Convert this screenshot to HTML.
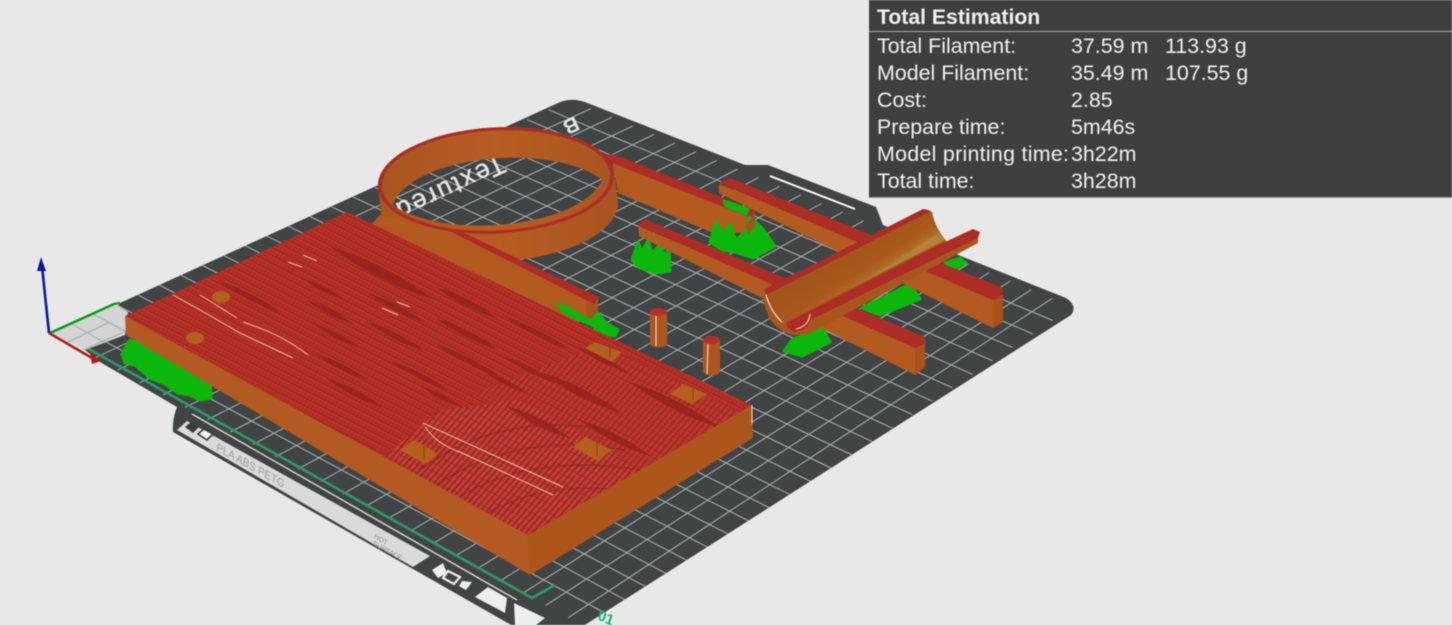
<!DOCTYPE html>
<html>
<head>
<meta charset="utf-8">
<title>Total Estimation</title>
<style>
html,body{margin:0;padding:0;background:#e8e8e8;width:1452px;height:625px;overflow:hidden}
svg{display:block;position:absolute;left:0;top:0;filter:blur(.4px)}
.t{font-family:"Liberation Sans",sans-serif;font-size:21.4px;fill:#f0f0f0}
</style>
</head>
<body>
<svg width="1452" height="625" viewBox="0 0 1452 625" xmlns="http://www.w3.org/2000/svg">
<defs>
<clipPath id="pc"><path d="M120,303 L558,103 Q572,96 590,104 L745,165 L768,165 L876,207 L883,225 L1066,298 Q1078,306 1071,315 L577,630 L520,630 L173,432 Q172,420 177,407 L100,362 L85,350 Z"/></clipPath>
<clipPath id="tc"><path d="M125,316 L347,212 L752,405 L528,535 Z"/></clipPath>
<pattern id="dots" width="4" height="7" patternUnits="userSpaceOnUse" patternTransform="rotate(27)">
<rect width="4" height="7" fill="#b62f27"/>
<rect y="6" width="4" height=".9" fill="#8f241d"/>
<rect y="0" width="4" height=".6" fill="#c9583c" opacity=".55"/>
<rect x="2.600" y="1" width="1" height="5" fill="#a8291f"/>
</pattern>
<pattern id="rib" width="5" height="8" patternUnits="userSpaceOnUse" patternTransform="rotate(27) skewX(-14)">
<rect width="5" height="8" fill="#c63e37"/>
<rect x="3.400" width="1.600" height="8" fill="#8b271e"/>
<rect y="7.400" width="5" height=".6" fill="#7e2219" opacity=".7"/>
</pattern>
<linearGradient id="pipe" gradientUnits="userSpaceOnUse" x1="845" y1="250" x2="866" y2="282">
<stop offset="0" stop-color="#a3541b"/><stop offset=".7" stop-color="#a9591c"/><stop offset=".92" stop-color="#ad6c25"/><stop offset="1" stop-color="#b3813a"/>
</linearGradient>
<linearGradient id="wall" x1="0" y1="0" x2="1" y2="0">
<stop offset="0" stop-color="#a85620"/><stop offset=".5" stop-color="#b75d22"/><stop offset="1" stop-color="#a95520"/>
</linearGradient>
<path id="l" d="M-50,0 Q0,-9 50,0 Q0,9 -50,0 Z" fill="#98241d"/>
</defs>

<rect width="1452" height="625" fill="#e8e8e8"/>
<path d="M120,303 L558,103 Q572,96 590,104 L745,165 L768,165 L876,207 L883,225 L1066,298 Q1078,306 1071,315 L577,630 L520,630 L173,432 Q172,420 177,407 L100,362 L85,350 Z" fill="#414444"/>

<g clip-path="url(#pc)">
<g stroke="#aeb2b2" stroke-width="1" fill="none">
<path d="M72.5,345.4L591,108.6M95,357.8L612,117.3M117.6,370.1L632.9,125.9M140.2,382.5L653.8,134.5M162.7,394.9L674.8,143.1M185.2,407.3L695.8,151.8M207.8,419.6L716.7,160.4M230.3,432L737.7,169M252.9,444.4L758.6,177.6M275.4,456.8L779.6,186.3M297.9,469.1L800.6,194.9M320.5,481.5L821.5,203.5M343,493.9L842.5,212.1M365.6,506.3L863.4,220.8M388.1,518.6L884.4,229.4M410.6,531L905.4,238M433.2,543.4L926.3,246.6M455.7,555.8L947.3,255.3M478.3,568.1L968.2,263.9M500.8,580.5L989.2,272.5M523.3,592.9L1010.2,281.1M545.9,605.3L1031.1,289.8M568.4,617.6L1052.1,298.4"/>
<path d="M71.7,323.3L611.1,616.5M93.3,313.6L631.2,603.1M115,303.9L651.2,589.6M136.7,294.2L671.3,576.2M158.4,284.5L691.4,562.7M180,274.7L711.5,549.2M201.7,265L731.6,535.8M223.4,255.3L751.6,522.3M245,245.6L771.7,508.9M266.7,235.9L791.8,495.4M288.4,226.2L811.9,482M310,216.5L832,468.5M331.7,206.8L852,455M353.4,197.1L872.1,441.6M375.1,187.4L892.2,428.1M396.7,177.6L912.3,414.6M418.4,167.9L932.4,401.2M440.1,158.2L952.4,387.7M461.7,148.5L972.5,374.3M483.4,138.8L992.6,360.8M505.1,129.1L1012.7,347.4M526.7,119.4L1032.8,333.9M548.4,109.7L1052.8,320.5"/>
</g>
</g>

<!-- front strip and print marks -->
<path d="M177,430 L187,421 L430,556 L413,567 Z" fill="#d9dada"/>
<path d="M192,414 L517,600" stroke="#d9dada" stroke-width="1.400" fill="none"/>
<path d="M87,348 L532,598 L555,585" stroke="#2b9a6a" stroke-width="2.600" fill="none"/>
<path d="M185,427 L191,422 L199,427 L193,433 Z" fill="#3a3a3a"/>
<path d="M198,434 L204,429 L213,434 L207,440 Z" fill="#efefef" stroke="#3a3a3a" stroke-width="1.600"/>
<text transform="matrix(.87 .49 -.2 .98 216,450)" font-family="Liberation Sans,sans-serif" font-size="11" fill="#9a9a9a">PLA ABS PETG</text>
<text transform="matrix(.87 .49 -.2 .98 374,538)" font-family="Liberation Sans,sans-serif" font-size="7" fill="#8a8a8a">HOT</text>
<text transform="matrix(.87 .49 -.2 .98 373,545)" font-family="Liberation Sans,sans-serif" font-size="7" fill="#8a8a8a">SURFACE</text>
<path d="M432,570 L443,563 L447,573 L438,578 Z" fill="#efefef"/>
<path d="M448,571 L460,577 L454,584 L443,578 Z" fill="none" stroke="#efefef" stroke-width="2.200"/>
<path d="M462,581 L472,582 L466,590 L459,586 Z" fill="#efefef"/>
<path d="M475,597 L488,587 L507,598 L505,613 Z" fill="#eeeeee"/>
<path d="M514,603 L545,618 L536,625 L515,625 Z" fill="#eeeeee"/>
<path d="M770,176 L855,209" stroke="#fff" stroke-width="2" fill="none"/>
<text transform="matrix(.9 .42 -.3 .95 597,619)" font-family="Liberation Sans,sans-serif" font-size="15" font-weight="bold" fill="#19b56c">01</text>

<!-- plate printing -->
<text transform="matrix(-.9 .42 -.42 -.9 500,155)" font-family="Liberation Sans,sans-serif" font-size="26" letter-spacing="2.500" stroke="#e4e4e4" stroke-width=".5" fill="#e4e4e4">Textured</text>
<text transform="matrix(-.9 .42 -.42 -.9 575,116)" font-family="Liberation Sans,sans-serif" font-size="21" font-weight="bold" fill="#e6e6e6">B</text>

<!-- origin patch -->
<path d="M50,333 L113,303 L128,312 L125,335 L85,350 Z" fill="#d3d4d4"/>
<path d="M68,342 L110,322 M83,350 L126,331 M72,324 L105,343 M93,314 L125,331" stroke="#a9abab" stroke-width="1"/>
<!-- axes -->
<path d="M50,333 L114,304 L120,303" stroke="#0a9a12" stroke-width="2.400" fill="none"/>
<path d="M49,333 L92,358" stroke="#b01c1c" stroke-width="2.600" fill="none"/>
<path d="M90,353 L101,361 L92,364 Z" fill="#c01616"/>
<path d="M49,333 L42,266" stroke="#10189a" stroke-width="2.600" fill="none"/>
<path d="M41,257 L46,271 L37,271 Z" fill="#10189a"/>

<!-- ring + arm 1 -->
<path fill-rule="evenodd" fill="url(#wall)" d="M378,187 L382,220 A118,53 -3 0 0 617,196 L614,174 A118,53 -3 0 0 378,187 Z M393,205 A111,48 -3 0 1 602,180 A113,49 -3 0 1 393,205 Z"/>
<path d="M380,215 L450,228 L598,300 L598,322 L560,322 L440,262 L370,226 Z" fill="#b25a20"/>
<path d="M586,301 L598,297 L598,318 L587,326 Z" fill="#a4531d"/>
<path fill-rule="evenodd" fill="#ad2c26" d="M378,187 A118,53 -3 0 1 614,174 A118,53 -3 0 1 378,187 Z M382,186.800 A114,50 -3 0 0 610,174.200 A114,50 -3 0 0 382,186.800 Z"/>
<path d="M440,226 L460,231 L599,297 L594,304 Z" fill="#ad2c26"/>
<!-- arm 2 -->
<path d="M612,161 L755,217 L755,227 L747,233 L713,233 L618,193 Z" fill="#b25a20"/>
<path d="M604,154 L616,155 L756,211 L754,219 L612,163 Z" fill="#ad2c26"/>

<!-- supports behind rails -->
<g fill="#0cb70c" stroke="#0cb70c" stroke-width="3" stroke-linejoin="round">
<path d="M130,340 L136,342 L210,383 L211,398 L200,400 L190,395 L178,393 L165,384 L150,378 L135,365 L125,363 L122,354 Z"/>
<path d="M632,260 L638,242 L642,252 L648,240 L652,254 L660,244 L664,255 L669,250 L670,271 L657,273 L640,268 Z"/>
<path d="M710,242 L716,222 L722,234 L730,224 L736,240 L745,232 L750,217 L762,228 L775,246 L753,258 L735,252 L722,250 Z"/>
<path d="M724,201 L748,209 L746,214 L726,206 Z"/>
<path d="M559,304 L568,308 L580,315 L592,321 L598,313 L606,323 L618,330 L615,336 L602,334 L592,325 L575,318 L561,310 Z"/>
<path d="M784,351 L793,339 L823,329 L830,342 L802,356 Z"/>
<path d="M862,308 L910,284 L920,299 L880,315 Z"/>
<path d="M945,263 L960,258 L966,263 L957,268 Z"/>
</g>

<!-- arm 2 end covers support -->
<path d="M745,226 L755,213 L755,227 L749,234 Z" fill="#a4531d"/>

<!-- cylinders -->
<path d="M650,312 L667,312 L667,343 A8.500,4.500 0 0 1 650,343 Z" fill="#ad5620"/>
<ellipse cx="658.500" cy="312" rx="8.500" ry="4" fill="#b32f28"/>
<path d="M656,316 L656,346" stroke="#f3e9dc" stroke-width="1"/>
<path d="M703,340 L720,340 L720,371 A8.500,4.500 0 0 1 703,371 Z" fill="#ad5620"/>
<ellipse cx="711.500" cy="340" rx="8.500" ry="4" fill="#b32f28"/>
<path d="M708,344 L707,374" stroke="#f3e9dc" stroke-width="1"/>

<!-- rail 3 -->
<path d="M719,184 L1003,295 L1003,322 L993,328 L719,193 Z" fill="#b25a20"/>
<path d="M993,298 L1003,295 L1003,322 L993,328 Z" fill="#a9531c"/>
<path d="M719,183 L730,178 L1003,288 L1001,297 L993,300 Z" fill="#ad2c26"/>
<!-- rail 4 -->
<path d="M638,226 L925,345 L925,367 L915,375 L639,236 Z" fill="#b25a20"/>
<path d="M915,345 L925,340 L925,367 L915,375 Z" fill="#a9531c"/>
<path d="M638,225 L645,219 L925,337 L924,344 L915,348 Z" fill="#ad2c26"/>

<!-- half pipe -->
<path d="M763,291 L925,209 L932,212 Q935,228 947,242 L978,232 L978,243 L818,329 Q808,336 793,335 Q775,330 768,315 Q763,303 763,291 Z" fill="#a8561e"/>
<path d="M766,293 L930,213 Q934,228 945,240 L785,322 Q772,310 766,293 Z" fill="url(#pipe)"/>
<path d="M763,290 L923,209 L931,211 L768,294 Z" fill="#ad2c26"/>
<path d="M786,323 L943,243 L973,229 L980,232 L978,238 L810,320 Q808,330 795,332 Q787,330 786,323 Z" fill="#ad2c26"/>
<path d="M766,295 Q771,312 782,322" stroke="#f3e9dc" stroke-width="1.200" fill="none"/>
<path d="M810,314 Q809,326 796,329" stroke="#f3e9dc" stroke-width="1" fill="none"/>

<!-- slab -->
<path d="M125,316 L528,535 L530,575 L126,335 Z" fill="#b25a22"/>
<path d="M528,535 L752,405 L753,438 L530,575 Z" fill="#ad561c"/>
<path d="M125,316 L347,212 L752,405 L528,535 Z" fill="url(#dots)"/>
<g clip-path="url(#tc)">
<path d="M380,460 L528,535 L640,470 L520,400 L440,410 Z" fill="url(#rib)" opacity=".92"/>
<path d="M470,395 L640,470 L740,412 L600,345 Z" fill="url(#rib)" opacity=".55"/>
<g fill="none" stroke="#7e241c" stroke-width="1.200" opacity=".6">
<path d="M440,510 Q520,450 640,470"/><path d="M430,490 Q510,430 625,450"/><path d="M470,525 Q530,480 620,490"/><path d="M420,470 Q500,410 610,430"/>
</g>
<use href="#l" transform="translate(250,297) rotate(27) scale(.7)"/>
<use href="#l" transform="translate(382,273) rotate(27) scale(1.15)"/>
<use href="#l" transform="translate(323,289) rotate(27) scale(.5)"/>
<use href="#l" transform="translate(330,312) rotate(27) scale(.55)"/>
<use href="#l" transform="translate(337,336) rotate(27) scale(.55)"/>
<use href="#l" transform="translate(397,308) rotate(27) scale(.65)"/>
<use href="#l" transform="translate(395,336) rotate(27) scale(.65)"/>
<use href="#l" transform="translate(467,303) rotate(27) scale(.7)"/>
<use href="#l" transform="translate(467,334) rotate(27) scale(.7)"/>
<use href="#l" transform="translate(342,367) rotate(27) scale(.6)"/>
<use href="#l" transform="translate(420,376) rotate(27) scale(.65)"/>
<use href="#l" transform="translate(467,360) rotate(27) scale(.7)"/>
<use href="#l" transform="translate(355,393) rotate(27) scale(.65)"/>
<use href="#l" transform="translate(442,397) rotate(27) scale(.5)"/>
<use href="#l" transform="translate(537,333) rotate(27) scale(.7)"/>
<use href="#l" transform="translate(582,393) rotate(27) scale(.9)"/>
<use href="#l" transform="translate(615,438) rotate(27) scale(.8)"/>
<use href="#l" transform="translate(505,382) rotate(27) scale(.55)"/>
<use href="#l" transform="translate(538,422) rotate(27) scale(.75)"/>
<use href="#l" transform="translate(675,405) rotate(27)"/>
<use href="#l" transform="translate(603,360) rotate(27) scale(.6)"/>
<use href="#l" transform="translate(530,370) rotate(27) scale(.6)"/>
<g fill="none" stroke="#e9c7a0" stroke-width="1">
<path d="M200,295 L237,318"/>
<path d="M173,295 L200,310 L240,333 L293,358"/>
<path d="M243,322 Q283,335 308,355"/>
<path d="M288,262 L302,267"/>
<path d="M303,255 L317,261"/>
<path d="M382,308 L398,315"/>
<path d="M397,302 L410,307"/>
<path d="M423,423 L563,487"/>
<path d="M425,427 Q438,445 460,452 L553,495"/>
</g>
</g>
<path d="M752,405 L752,424" stroke="#f1e4d3" stroke-width="1"/>
<g fill="#b3601f">
<ellipse cx="221" cy="297" rx="9" ry="6"/>
<ellipse cx="195" cy="338" rx="9" ry="6"/>
<path d="M585,348 L595,342 L622,352 L612,362 Z"/>
<path d="M670,394 L683,384 L707,394 L692,404 Z"/>
<path d="M573,447 L585,437 L612,450 L598,461 Z"/>
<path d="M400,450 L414,440 L438,454 L425,464 Z"/>
</g>
<path d="M610,346 L610,358 M693,388 L693,400 M597,443 L597,456 M424,446 L424,459" stroke="#8f4a18" stroke-width="1.400"/>

<!-- panel -->
<rect x="869" y="0" width="583" height="197" fill="#3e3f3f"/>
<rect x="869" y="197" width="583" height="1" fill="#999"/>
<rect x="869" y="31" width="583" height="1" fill="#a8a8a8"/>
<text class="t" x="877" y="24" style="font-weight:bold;font-size:21.2px">Total Estimation</text>
<text class="t" x="877" y="53">Total Filament:</text><text class="t" x="1071" y="53">37.59 m</text><text class="t" x="1165" y="53">113.93 g</text>
<text class="t" x="877" y="80">Model Filament:</text><text class="t" x="1071" y="80">35.49 m</text><text class="t" x="1165" y="80">107.55 g</text>
<text class="t" x="877" y="107">Cost:</text><text class="t" x="1071" y="107">2.85</text>
<text class="t" x="877" y="134">Prepare time:</text><text class="t" x="1071" y="134">5m46s</text>
<text class="t" x="877" y="161" textLength="192">Model printing time:</text><text class="t" x="1071" y="161">3h22m</text>
<text class="t" x="877" y="188">Total time:</text><text class="t" x="1071" y="188">3h28m</text>
</svg>
</body>
</html>
